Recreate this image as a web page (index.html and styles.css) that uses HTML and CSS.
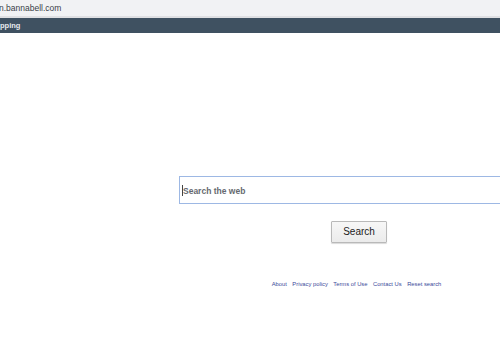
FILE: index.html
```html
<!DOCTYPE html>
<html>
<head>
<meta charset="utf-8">
<link rel="stylesheet" href="styles.css">
</head>
<body>
<div class="urlbar"><span class="url">n.bannabell.com</span></div>
<div class="navbar"><span class="navtext">pping</span></div>
<div class="main">
  <form class="form">
    <div class="inputbox"><span class="caret"></span><span class="placeholder">Search the web</span></div>
    <div class="btnrow"><button type="button" class="btn">Search</button></div>
    <div class="links">
      <a class="link">About</a>
      <a class="link">Privacy policy</a>
      <a class="link">Terms of Use</a>
      <a class="link">Contact Us</a>
      <a class="link">Reset search</a>
    </div>
  </form>
</div>
</body>
</html>
```
FILE: styles.css
```css
html, body {
  margin: 0;
  padding: 0;
  background: #ffffff;
  overflow: hidden;
  width: 500px;
  height: 350px;
  font-family: "Liberation Sans", Arial, sans-serif;
}
.urlbar {
  height: 16px;
  background: #f1f2f4;
  border-bottom: 2px solid #dfe0e3;
  display: flex;
  align-items: center;
}
.url {
  font-size: 8.5px;
  color: #3a3f48;
  margin-left: -1px;
  margin-top: -1px;
}
.navbar {
  height: 15px;
  background: #3f5161;
  display: flex;
  align-items: center;
}
.navtext {
  color: #e8ecef;
  font-size: 7.5px;
  font-weight: bold;
}
.main {
  width: 500px;
  overflow: hidden;
  padding-top: 143px;
  padding-left: 179px;
  box-sizing: border-box;
  height: 332px;
}
.form {
  width: 360px;
}
.inputbox {
  height: 26px;
  border: 1px solid #9db8e4;
  display: flex;
  align-items: center;
  padding-left: 2px;
}
.caret {
  width: 1px;
  height: 11px;
  background: #444;
}
.placeholder {
  font-size: 8.5px;
  font-weight: bold;
  color: #666a70;
  margin-top: 1px;
}
.btnrow {
  display: flex;
  justify-content: center;
  padding-top: 17px;
}
.btn {
  width: 56px;
  height: 22px;
  background: linear-gradient(#f7f7f7, #ebebeb);
  border: 1px solid #b9b9b9;
  box-shadow: 0 1px 1px rgba(0,0,0,0.15);
  border-radius: 1px;
  font-family: "Liberation Sans", Arial, sans-serif;
  font-size: 10px;
  color: #222;
  padding: 0;
  padding-bottom: 1px;
}
.links {
  display: flex;
  justify-content: center;
  gap: 5.5px;
  padding-top: 38px;
  margin-left: -5px;
}
.link {
  font-size: 5.8px;
  color: #3b4a9a;
  text-decoration: none;
}
```
